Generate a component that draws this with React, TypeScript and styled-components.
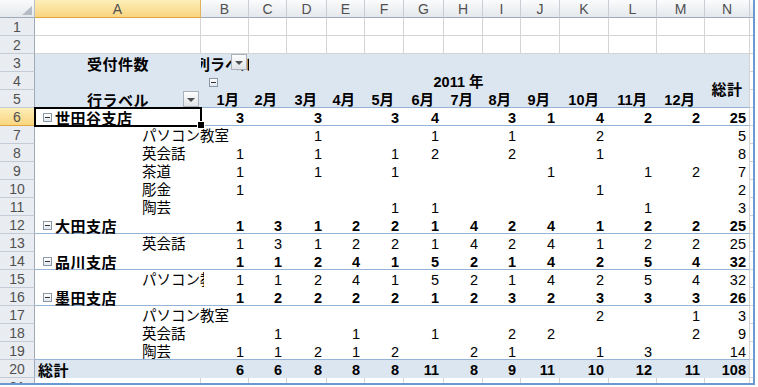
import React from 'react';
import styled, { createGlobalStyle } from 'styled-components';

const FONT = `"Liberation Sans", "Noto Sans CJK JP", sans-serif`;
const GRID = '#d4d4d4';
const BAND = '#dce6f1';
const RULE = '#95b3d7';
const HEAD_LINE = '#9eaab8';

// row header, A..N, then a bit of O
const COL_WIDTHS = [35, 166, 48, 38, 40, 38, 39, 40, 39, 38, 39, 49, 48, 48, 45, 80];
const LETTERS = 'ABCDEFGHIJKLMNO'.split('');
const MONTHS = Array.from({ length: 12 }, (_, i) => `${i + 1}月`);

type Val = number | null;

type PivotRow = {
  label: string;
  values: Val[]; // 1月..12月, 総計
  branch?: boolean;
  rule?: boolean;
  clip?: boolean;
  selected?: boolean;
};

const _ = null;

const ROWS: PivotRow[] = [
  { label: '世田谷支店', branch: true, rule: true, selected: true, values: [3, _, 3, _, 3, 4, _, 3, 1, 4, 2, 2, 25] },
  { label: 'パソコン教室', values: [_, _, 1, _, _, 1, _, 1, _, 2, _, _, 5] },
  { label: '英会話', values: [1, _, 1, _, 1, 2, _, 2, _, 1, _, _, 8] },
  { label: '茶道', values: [1, _, 1, _, 1, _, _, _, 1, _, 1, 2, 7] },
  { label: '彫金', values: [1, _, _, _, _, _, _, _, _, 1, _, _, 2] },
  { label: '陶芸', values: [_, _, _, _, 1, 1, _, _, _, _, 1, _, 3] },
  { label: '大田支店', branch: true, rule: true, values: [1, 3, 1, 2, 2, 1, 4, 2, 4, 1, 2, 2, 25] },
  { label: '英会話', values: [1, 3, 1, 2, 2, 1, 4, 2, 4, 1, 2, 2, 25] },
  { label: '品川支店', branch: true, rule: true, values: [1, 1, 2, 4, 1, 5, 2, 1, 4, 2, 5, 4, 32] },
  { label: 'パソコン教室', clip: true, values: [1, 1, 2, 4, 1, 5, 2, 1, 4, 2, 5, 4, 32] },
  { label: '墨田支店', branch: true, rule: true, values: [1, 2, 2, 2, 2, 1, 2, 3, 2, 3, 3, 3, 26] },
  { label: 'パソコン教室', values: [_, _, _, _, _, _, _, _, _, 2, _, 1, 3] },
  { label: '英会話', values: [_, 1, _, 1, _, 1, _, 2, 2, _, _, 2, 9] },
  { label: '陶芸', rule: true, values: [1, 1, 2, 1, 2, _, 2, 1, _, 1, 3, _, 14] },
];

const TOTALS = [6, 6, 8, 8, 8, 11, 8, 9, 11, 10, 12, 11, 108];

const GlobalStyle = createGlobalStyle`
  *, *::before, *::after {
    box-sizing: border-box;
  }

  body {
    margin: 0;
    background: #fff;
    font-family: ${FONT};
  }
`;

const Frame = styled.div`
  width: 758px;
  height: 387px;
  background: #fff;
  overflow: hidden;
`;

const Sheet = styled.div`
  display: grid;
  grid-template-columns: ${COL_WIDTHS.map((w) => `${w}px`).join(' ')};
  grid-auto-rows: 18px;
  width: 755px;
  height: 385px;
  overflow: hidden;
  border-right: 2px solid #6d99d1;
  border-bottom: 2px solid #6d99d1;
  font-family: ${FONT};
  font-size: 14.5px;
  color: #000;
`;

const Corner = styled.div`
  display: flex;
  align-items: flex-end;
  justify-content: flex-end;
  padding: 0 2px 2px 0;
  background: linear-gradient(#fafbfc, #e5e8ec);
  border-right: 1px solid #b8c0ca;
  border-bottom: 1px solid ${HEAD_LINE};

  &::after {
    content: '';
    border-left: 10px solid transparent;
    border-bottom: 9px solid #b6bcc5;
  }
`;

const ColHead = styled.div<{ $active?: boolean }>`
  display: flex;
  align-items: center;
  justify-content: center;
  font: 14px "Liberation Sans", sans-serif;
  color: #505050;
  background: ${(p) => (p.$active ? 'linear-gradient(#fdeeb9, #f9d57f)' : 'linear-gradient(#fafbfc, #e5e8ec)')};
  border-right: 1px solid ${(p) => (p.$active ? '#e0b25c' : '#c9ced5')};
  border-bottom: 1px solid ${(p) => (p.$active ? '#e0a53f' : HEAD_LINE)};
`;

const RowHead = styled.div<{ $active?: boolean }>`
  display: flex;
  align-items: center;
  justify-content: center;
  font: 14px "Liberation Sans", sans-serif;
  color: #505050;
  background: ${(p) => (p.$active ? 'linear-gradient(#fdeeb9, #f9d57f)' : '#e9ecf0')};
  border-right: 1px solid ${HEAD_LINE};
  border-bottom: 1px solid ${(p) => (p.$active ? '#e0a53f' : '#c4cbd4')};
`;

const GridCell = styled.div`
  border-right: 1px solid ${GRID};
  border-bottom: 1px solid ${GRID};
`;

const PivotCell = styled.div<{ $band?: boolean; $rule?: boolean; $edge?: boolean; $bold?: boolean }>`
  position: relative;
  display: flex;
  align-items: flex-start;
  min-width: 0;
  padding-top: 2px;
  line-height: 17px;
  white-space: nowrap;
  font-weight: ${(p) => (p.$bold ? 700 : 400)};
  background: ${(p) => (p.$band ? BAND : 'transparent')};
  border-right: ${(p) => (p.$edge ? `1px solid ${GRID}` : 'none')};
  border-bottom: ${(p) => (p.$rule ? `1px solid ${RULE}` : 'none')};
`;

const NumCell = styled(PivotCell)`
  justify-content: flex-end;
  padding-right: ${(p) => (p.$edge ? 3 : 5)}px;
`;

const MonthCell = styled(PivotCell)`
  justify-content: flex-end;
  padding-right: 10px;
`;

const CaptionCell = styled(PivotCell)`
  justify-content: center;
  font-size: 15px;
  letter-spacing: 0.5px;
`;

const FieldCell = styled(PivotCell)`
  justify-content: center;
  overflow: hidden;
  font-weight: 700;
  font-size: 15px;
`;

const FieldText = styled.span`
  flex: none;
`;

const YearCell = styled(PivotCell)`
  grid-column: span 12;
  padding-left: 8px;
  padding-right: 6px;
  font-weight: 700;
`;

const YearText = styled.span`
  flex: 1;
  text-align: center;
`;

const TotalHead = styled(PivotCell)`
  grid-row: span 2;
  align-items: center;
  justify-content: center;
  padding-top: 0;
  font-size: 15px;
  letter-spacing: 0.5px;
`;

const LabelCell = styled(PivotCell)<{ $branch?: boolean; $selected?: boolean }>`
  gap: 3px;
  padding-left: ${(p) => (p.$branch ? 8 : 107)}px;
  z-index: ${(p) => (p.$selected ? 2 : 'auto')};
  outline: ${(p) => (p.$selected ? '2px solid #000' : 'none')};
  outline-offset: -1px;
`;

const LabelText = styled.span<{ $branch?: boolean; $clip?: boolean }>`
  font-weight: ${(p) => (p.$branch ? 700 : 400)};
  font-size: ${(p) => (p.$branch ? 15 : 14.5)}px;
  letter-spacing: ${(p) => (p.$branch ? 0.5 : 0)}px;
  max-width: ${(p) => (p.$clip ? '62px' : 'none')};
  overflow: ${(p) => (p.$clip ? 'hidden' : 'visible')};
  flex: none;
`;

const TotalLabel = styled(PivotCell)`
  padding-left: 3px;
  font-size: 15px;
  letter-spacing: 0.5px;
`;

const Toggle = styled.span`
  position: relative;
  flex: none;
  align-self: center;
  width: 9px;
  height: 9px;
  border: 1px solid #8d98a7;
  background: linear-gradient(#fff, #e1e7ef);

  &::after {
    content: '';
    position: absolute;
    left: 1px;
    right: 1px;
    top: 3px;
    height: 1px;
    background: #333;
  }
`;

const DropButton = styled.span<{ $top: number }>`
  position: absolute;
  top: ${(p) => p.$top}px;
  right: 2px;
  width: 16px;
  height: 16px;
  display: flex;
  align-items: center;
  justify-content: center;
  border: 1px solid #a9b0b9;
  background: linear-gradient(#fdfdfd, #e0e3e7);

  &::after {
    content: '';
    margin-top: 1px;
    border-left: 4px solid transparent;
    border-right: 4px solid transparent;
    border-top: 4px solid #505050;
  }
`;

const FillHandle = styled.span`
  position: absolute;
  right: -3px;
  bottom: -3px;
  width: 6px;
  height: 6px;
  background: #000;
  box-shadow: 0 0 0 1px #fff;
`;

const PlainRow: React.FC<{ n: number }> = ({ n }) => (
  <>
    <RowHead>{n}</RowHead>
    {LETTERS.map((l) => <GridCell key={l} />)}
  </>
);

const ValueCells: React.FC<{ values: Val[]; bold?: boolean; rule?: boolean; band?: boolean }> = ({ values, bold, rule, band }) => (
  <>
    {values.map((v, i) => (
      <NumCell key={i} $bold={bold} $rule={rule} $band={band} $edge={i === values.length - 1}>
        {v ?? ''}
      </NumCell>
    ))}
  </>
);

const App: React.FC = () => (
  <>
    <GlobalStyle />
    <Frame>
      <Sheet>
        <Corner />
        {LETTERS.map((l, i) => (
          // column O is only a sliver at the window edge, its letter is off screen
          <ColHead key={l} $active={i === 0}>{l === 'O' ? '' : l}</ColHead>
        ))}

        <PlainRow n={1} />
        <PlainRow n={2} />

        <RowHead>3</RowHead>
        <CaptionCell $band $bold>受付件数</CaptionCell>
        <FieldCell $band>
          <FieldText>列ラベル</FieldText>
          <DropButton $top={0} />
        </FieldCell>
        {LETTERS.slice(2, 13).map((l) => <PivotCell key={l} $band />)}
        <PivotCell $band $edge />
        <GridCell />

        <RowHead>4</RowHead>
        <PivotCell $band />
        <YearCell $band>
          <Toggle />
          <YearText>2011 年</YearText>
        </YearCell>
        <TotalHead $band $edge $rule $bold>総計</TotalHead>
        <GridCell />

        <RowHead>5</RowHead>
        <CaptionCell $band $rule $bold>
          行ラベル
          <DropButton $top={1} />
        </CaptionCell>
        {MONTHS.map((m) => (
          <MonthCell key={m} $band $rule $bold>{m}</MonthCell>
        ))}
        <GridCell />

        {ROWS.map((r, i) => (
          <React.Fragment key={i}>
            <RowHead $active={r.selected}>{i + 6}</RowHead>
            <LabelCell $rule={r.rule} $branch={r.branch} $selected={r.selected}>
              {r.branch && <Toggle />}
              <LabelText $branch={r.branch} $clip={r.clip}>{r.label}</LabelText>
              {r.selected && <FillHandle />}
            </LabelCell>
            <ValueCells values={r.values} bold={r.branch} rule={r.rule} />
            <GridCell />
          </React.Fragment>
        ))}

        <RowHead>20</RowHead>
        <TotalLabel $band $bold>総計</TotalLabel>
        <ValueCells values={TOTALS} bold band />
        <GridCell />

        <PlainRow n={21} />
      </Sheet>
    </Frame>
  </>
);

export default App;
